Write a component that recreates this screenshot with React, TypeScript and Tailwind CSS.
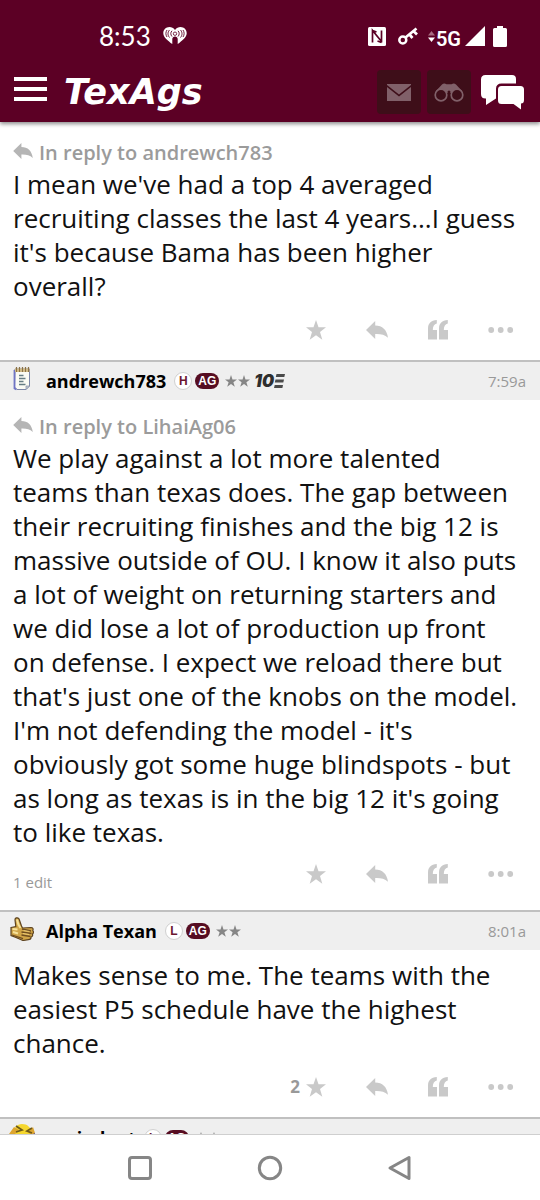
import type { ReactNode } from "react";

type IconProps = { className?: string };

function ReplyIcon({ className = "" }: IconProps) {
  return (
    <svg viewBox="0 0 22 18" className={className} fill="currentColor" aria-hidden="true">
      <path d="M0 9 9.2 0v4.6C16.5 4.8 20.8 8.700 22 16.800 18.600 13.600 14.600 12.800 9.200 13V18Z" />
    </svg>
  );
}

function StarIcon({ className = "" }: IconProps) {
  return (
    <svg viewBox="0 0 20 20" className={className} fill="currentColor" aria-hidden="true">
      <path d="m10 0 2.500 7.300H20l-6 4.800 2.300 7.600L10 15.200l-6.300 4.500L6 12.100 0 7.300h7.500Z" />
    </svg>
  );
}

function QuoteIcon({ className = "" }: IconProps) {
  return (
    <svg viewBox="0 0 20 20" className={className} fill="currentColor" aria-hidden="true">
      <path d="M0 19.500V8.500C0 3.500 3 .4 8.800 0v3.400C6.300 4 4.800 6 4.800 10H9v9.500Z" />
      <path d="M11 19.500V8.500C11 3.500 14 .4 19.800 0v3.400C17.300 4 15.800 6 15.800 10H20v9.500Z" />
    </svg>
  );
}

function DotsIcon({ className = "" }: IconProps) {
  return (
    <svg viewBox="0 0 26 6" className={className} fill="currentColor" aria-hidden="true">
      <circle cx="3.200" cy="3" r="2.900" />
      <circle cx="12.700" cy="3" r="2.900" />
      <circle cx="22.200" cy="3" r="2.900" />
    </svg>
  );
}

function NotepadAvatar() {
  return (
    <svg viewBox="0 0 18 24" className="h-6 w-[18px]" aria-hidden="true">
      <path d="M2 2h14.500v17l-3.500 3.500H4L1.500 20Z" fill="#fbfbf4" stroke="#7c86a8" />
      <path d="M1.500 3v18.500l2 1" fill="none" stroke="#6f74c4" strokeWidth="1.800" />
      <path d="M13 22.500V19h3.500Z" fill="#c3cbd8" stroke="#8790a5" strokeWidth=".7" />
      <path d="M2 1.500h14.500V5H2Z" fill="#d8c28e" />
      <path d="M3.500 0v5M6.500 0v5M9.500 0v5M12.500 0v5M15.500 0v5" stroke="#8b7248" strokeWidth="1.200" />
      <path d="M6 8.500h4.500M6 11.500h6.500M6 14.500h4.500M6 17.500h6.500" stroke="#667d83" strokeWidth="1.300" />
    </svg>
  );
}

function ThumbAvatar() {
  return (
    <svg viewBox="0 0 24 24" className="h-6 w-6" aria-hidden="true">
      <path
        d="M1 10.500 5.800 9.500 5 3C4.800.8 7.500 0 9 1.800L11.500 9l1 2 8.500-.5c2 0 2.500 1.500 1.800 3 .9 1.200.7 2.700-.3 3.500.4 1.600-.2 2.700-1.400 3 0 1.600-1 2.700-2.700 2.700l-5.400.8L6 20.500l-5-2Z"
        fill="#d0a548"
        stroke="#5d4320"
        strokeWidth="1.200"
      />
      <path d="M7 2.500c.5 3 1.500 6 3.500 8.500M2.500 12l5 .5M3 15l5 1.500" stroke="#f7e29a" strokeWidth="2" fill="none" />
      <path d="m12 12 9 2M11.500 15l10 1.500M11.500 18l9 1.500M2 18l11 3.700" stroke="#6f4d20" strokeWidth="1.300" />
      <path d="m13.500 13.500 6 1M13 16.500l6 1" stroke="#f0cf78" strokeWidth=".9" />
    </svg>
  );
}

function SmileyAvatar() {
  return (
    <svg viewBox="0 0 28 28" className="h-7 w-7" aria-hidden="true">
      <path d="M2 9h25l-1 12H3Z" fill="#55489b" />
      <path d="M14 0c6 0 10 4 10 13S19 26 14 26 5 21 5 13 8 0 14 0Z" fill="#f5d72f" />
      <path d="M1 10 6 3l5 3-5 5ZM27 9l-2-6-5 5 3 3Z" fill="#dda52f" />
      <path d="m8 2 6 4-6 2M24 4l-5 3 5 2" fill="none" stroke="#6f5a18" strokeWidth="1.800" />
      <path d="M8 15c3 5 9 5 12 0Z" fill="#7b3322" />
    </svg>
  );
}

function StatusBar() {
  return (
    <div className="flex h-[62px] items-center justify-between pt-[10px] pr-[33px] pl-[99px]">
      <div className="flex items-center gap-3">
        <span className="font-[Lato,sans-serif] text-[26px] leading-7">8:53</span>
        <svg viewBox="0 0 24 18" className="h-[18px] w-6" aria-hidden="true">
          <path
            d="M12 3C10.400.8 8.600 0 6.500 0 2.900 0 .3 2.800.3 6.200c0 4.300 4.800 7.500 9 10.900V12c0-1.500 1.200-2.600 2.700-2.600s2.700 1.100 2.700 2.600v5.100c4.200-3.400 9-6.600 9-10.900C23.700 2.800 21.100 0 17.500 0 15.400 0 13.600.8 12 3Z"
            fill="#fff"
          />
          <circle cx="12" cy="6.700" r="1.700" fill="#fff" stroke="#5c0025" strokeWidth=".8" />
          <path
            d="M9 3.800c-1.600 1.600-1.600 4 0 5.700M15 3.800c1.600 1.600 1.600 4 0 5.700M6.500 3c-2 2.300-2 5.200 0 7.500M17.500 3c2 2.300 2 5.200 0 7.500M4 3c-1.500 2.300-1.500 4.700 0 7M20 3c1.500 2.300 1.500 4.700 0 7"
            fill="none"
            stroke="#5c0025"
            strokeWidth=".9"
          />
        </svg>
      </div>
      <div className="flex items-center">
        <svg viewBox="0 0 18 19" className="h-[19px] w-[18px]" aria-hidden="true">
          <rect width="18" height="19" rx="1.500" fill="#fff" />
          <path d="M4.500 15.500V3.500L13.500 14.500M13.500 3.500v12M4.500 3.500l4 1.500M13.500 15.500l-4-1.500" fill="none" stroke="#5c0025" strokeWidth="1.700" />
        </svg>
        <svg viewBox="0 0 20 18" className="ml-3 h-[18px] w-5" aria-hidden="true">
          <circle cx="4.800" cy="13" r="3.500" fill="none" stroke="#fff" strokeWidth="2.500" />
          <path d="M7.500 10.500 18.500 1.500M11.500 7.500l3 3.500M15.500 4l3.500 3.500" fill="none" stroke="#fff" strokeWidth="2.700" />
        </svg>
        <svg viewBox="0 0 7 11" className="ml-[10px] h-[11px] w-[7px]" aria-hidden="true">
          <path d="M0 4.500 3.500 0 7 4.500Z" fill="#a76a80" />
          <path d="M0 6.500h7L3.500 11Z" fill="#fff" />
        </svg>
        <span className="ml-px pt-[6px] font-[Roboto,sans-serif] text-[20px] leading-6 font-semibold">5G</span>
        <svg viewBox="0 0 20 20" className="ml-1 h-5 w-5" aria-hidden="true">
          <path d="M20 0v20H0Z" fill="#fff" />
        </svg>
        <svg viewBox="0 0 14 21" className="ml-2 h-[21px] w-[14px]" aria-hidden="true">
          <path d="M4 0h6v2h2.500Q14 2 14 3.500v16q0 1.500-1.500 1.500h-11Q0 21 0 19.500v-16Q0 2 1.500 2H4Z" fill="#fff" />
        </svg>
      </div>
    </div>
  );
}

function AppBar() {
  return (
    <div className="flex h-15 items-center pr-4 pl-[14px]">
      <button type="button" aria-label="Menu" className="flex w-[33px] flex-col gap-[6px] pb-[6px]">
        <span className="h-1 bg-white" />
        <span className="h-1 bg-white" />
        <span className="h-1 bg-white" />
      </button>
      <a href="#" className="ml-[17px] font-[DejaVu_Sans,sans-serif] text-[35px] leading-10 font-bold italic">
        TexAgs
      </a>
      <div className="ml-auto flex items-center gap-[6px]">
        <button type="button" aria-label="Messages" className="flex size-11 items-center justify-center rounded bg-[#3e0e19]">
          <svg viewBox="0 0 24 17" className="h-[17px] w-6" fill="#806069" aria-hidden="true">
            <path d="M0 0h24v1L12 10.500 0 1Z" />
            <path d="m0 3 12 9.500L24 3v14H0Z" />
          </svg>
        </button>
        <button type="button" aria-label="Watched" className="flex size-11 items-center justify-center rounded bg-[#3e0e19]">
          <svg viewBox="0 0 30 19" className="h-[19px] w-[30px]" aria-hidden="true">
            <path d="M2 8 8 1.500Q10-.5 12.500 1.200h5Q20-.5 22 1.500L28 8l-9 2h-8Z" fill="#806069" />
            <circle cx="7" cy="12" r="5.800" fill="#3e0e19" stroke="#806069" strokeWidth="1.700" />
            <circle cx="23" cy="12" r="5.800" fill="#3e0e19" stroke="#806069" strokeWidth="1.700" />
            <circle cx="15" cy="9" r="1.500" fill="#3e0e19" />
          </svg>
        </button>
        <button type="button" aria-label="Forums" className="ml-1">
          <svg viewBox="0 0 43 35" className="h-[35px] w-[43px]" fill="#fff" aria-hidden="true">
            <path d="M4.500 0H31q4 0 4 4v4.500H20.500q-5.500 0-5.500 5.500v9.500L5 30V23.500H4.500q-4.500 0-4.500-4.500V4.500Q0 0 4.500 0Z" />
            <path d="M20.500 11H39.500q3.500 0 3.500 3.500V25q0 3.500-3 3.500V34.500L32.500 29h-12Q17 29 17 25.500v-11Q17 11 20.500 11Z" />
          </svg>
        </button>
      </div>
    </div>
  );
}

function Badges({ letter, stars = 2, ten = false }: { letter: string; stars?: number; ten?: boolean }) {
  return (
    <span className="flex items-center font-[Liberation_Sans,sans-serif] text-[12px] leading-4 font-bold">
      <span className="flex size-[18px] items-center justify-center rounded-full border border-[#d0d0d0] bg-white text-[#6b1730]">
        {letter}
      </span>
      <span className="ml-[3px] flex h-4 w-6 items-center justify-center rounded-full bg-[#560d22] text-white">AG</span>
      <span className="ml-[6px] flex gap-px text-[#868686]">
        {Array.from({ length: stars }, (_, i) => (
          <StarIcon key={i} className="size-3" />
        ))}
      </span>
      {ten && (
        <span className="ml-1 flex items-center font-[Inter,sans-serif] text-[17px] font-black text-[#2e2e2e] italic">
          10
          <svg viewBox="0 0 11 14" className="h-[14px] w-[11px]" fill="#4a4a4a" aria-hidden="true">
            <path d="M2.500 0H11l-.7 3H1.800ZM1.500 5.500H10l-.7 3H.8ZM.700 11H9l-.6 3H0Z" />
          </svg>
        </span>
      )}
    </span>
  );
}

function PostBar({ avatar, name, time, badges }: { avatar: ReactNode; name: string; time: string; badges: ReactNode }) {
  return (
    <header className="flex h-10 items-center border-t-2 border-[#c0c0c0] bg-[#efefef] pr-[14px] pl-2">
      <span className="flex h-7 w-7 items-start justify-center">{avatar}</span>
      <a href="#" className="ml-[10px] text-[18px] leading-6 font-bold text-black">
        {name}
      </a>
      <span className="ml-2">{badges}</span>
      <time className="ml-auto text-[15px] leading-5 text-[#999]">{time}</time>
    </header>
  );
}

function ReplyTo({ name }: { name: string }) {
  return (
    <a href="#" className="flex items-center gap-[6px] text-[20px] leading-7 font-semibold text-[#9b9b9b]">
      <ReplyIcon className="mb-1 h-4 w-5 text-[#b5b5b5]" />
      In reply to {name}
    </a>
  );
}

function Actions({ count }: { count?: number }) {
  return (
    <div className="ml-auto flex h-6 items-center gap-10 pr-[6px] text-[#c9c9c9]">
      <button type="button" aria-label="Star" className="flex items-center gap-[6px]">
        {count !== undefined && <span className="text-[17px] leading-6 font-bold text-[#999]">{count}</span>}
        <StarIcon className="size-5" />
      </button>
      <button type="button" aria-label="Reply">
        <ReplyIcon className="h-[18px] w-[22px]" />
      </button>
      <button type="button" aria-label="Quote">
        <QuoteIcon className="size-5" />
      </button>
      <button type="button" aria-label="More">
        <DotsIcon className="h-[6px] w-[26px]" />
      </button>
    </div>
  );
}

const bodyText = "text-[26px] leading-[34px] text-[#111]";

export default function App() {
  return (
    <div className="flex h-screen flex-col bg-white font-['Open_Sans',sans-serif]">
      <header className="relative shrink-0 bg-[#5c0025] text-white shadow-[0_2px_4px_rgba(0,0,0,0.45)]">
        <StatusBar />
        <AppBar />
      </header>

      <main className="min-h-0 flex-1 overflow-hidden border-b border-[#cfcfcf]">
        <article className="pt-[17px] pr-5 pb-[18px] pl-[13px]">
          <ReplyTo name="andrewch783" />
          <p className={bodyText}>
            I mean we've had a top 4 averaged recruiting classes the last 4 years...I guess it's because Bama has been
            higher overall?
          </p>
          <footer className="mt-[15px] flex">
            <Actions />
          </footer>
        </article>

        <article>
          <PostBar avatar={<NotepadAvatar />} name="andrewch783" time="7:59a" badges={<Badges letter="H" ten />} />
          <div className="pt-[13px] pr-5 pb-[18px] pl-[13px]">
            <ReplyTo name="LihaiAg06" />
            <p className={bodyText}>
              We play against a lot more talented teams than texas does. The gap between their recruiting finishes and
              the big 12 is massive outside of OU. I know it also puts a lot of weight on returning starters and we did
              lose a lot of production up front on defense. I expect we reload there but that's just one of the knobs
              on the model. I'm not defending the model - it's obviously got some huge blindspots - but as long as
              texas is in the big 12 it's going to like texas.
            </p>
            <footer className="mt-[13px] flex h-[30px]">
              <span className="self-end text-[15px] leading-5 text-[#999]">1 edit</span>
              <Actions />
            </footer>
          </div>
        </article>

        <article>
          <PostBar avatar={<ThumbAvatar />} name="Alpha Texan" time="8:01a" badges={<Badges letter="L" />} />
          <div className="pt-2 pr-5 pb-[18px] pl-[13px]">
            <p className={bodyText}>
              Makes sense to me. The teams with the easiest P5 schedule have the highest chance.
            </p>
            <footer className="mt-[15px] flex">
              <Actions count={2} />
            </footer>
          </div>
        </article>

        <article>
          <PostBar avatar={<SmileyAvatar />} name="proindent" time="8:08a" badges={<Badges letter="L" />} />
        </article>
      </main>

      <nav aria-label="System" className="flex h-[65px] shrink-0 items-center justify-center gap-[104px] bg-white">
        <button type="button" aria-label="Recent apps">
          <svg viewBox="0 0 26 26" className="size-[26px]" fill="none" stroke="#868686" strokeWidth="3" aria-hidden="true">
            <rect x="2.500" y="2.500" width="21" height="21" rx="2.500" />
          </svg>
        </button>
        <button type="button" aria-label="Home">
          <svg viewBox="0 0 26 26" className="size-[26px]" fill="none" stroke="#868686" strokeWidth="3" aria-hidden="true">
            <circle cx="13" cy="13" r="10.700" />
          </svg>
        </button>
        <button type="button" aria-label="Back">
          <svg
            viewBox="0 0 26 26"
            className="size-[26px]"
            fill="none"
            stroke="#868686"
            strokeWidth="3"
            strokeLinejoin="round"
            aria-hidden="true"
          >
            <path d="M22 2.500v21L3 13Z" />
          </svg>
        </button>
      </nav>
    </div>
  );
}
